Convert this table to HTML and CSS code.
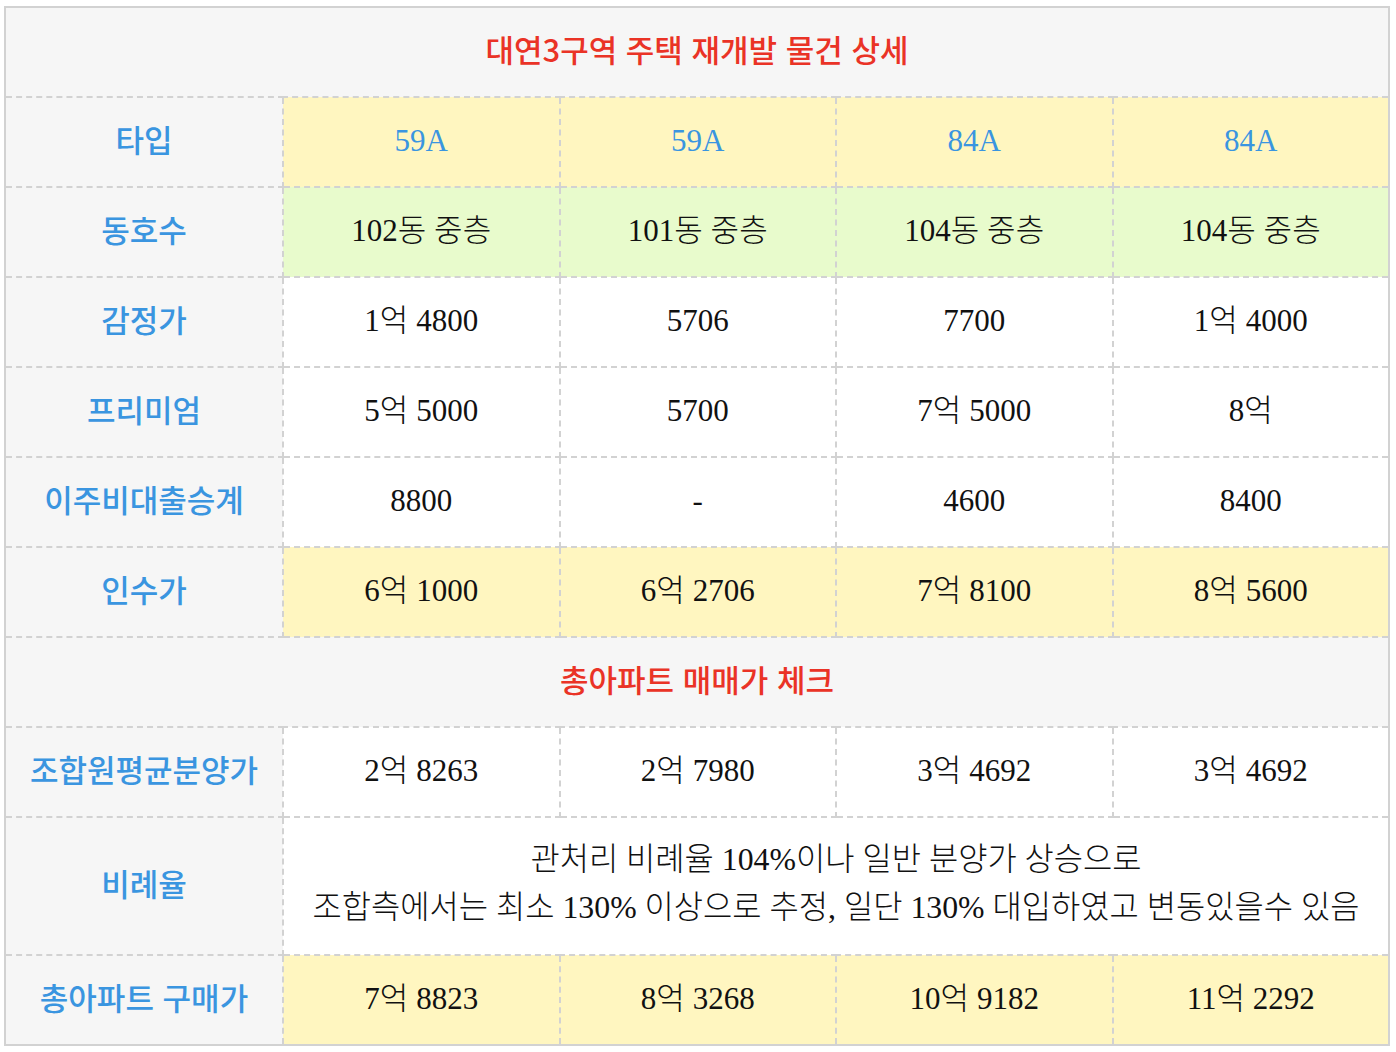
FILE: index.html
```html
<!DOCTYPE html>
<html lang="ko">
<head>
<meta charset="utf-8">
<link rel="stylesheet" href="styles.css">
</head>
<body>
<div class="wrap">
<table class="tbl">
  <colgroup>
    <col class="c-label"><col><col><col><col>
  </colgroup>
  <tr class="r-head"><td colspan="5" class="title">대연3구역 주택 재개발 물건 상세</td></tr>
  <tr><th>타입</th><td class="yel type">59A</td><td class="yel type">59A</td><td class="yel type">84A</td><td class="yel type">84A</td></tr>
  <tr><th>동호수</th><td class="grn">102동 중층</td><td class="grn">101동 중층</td><td class="grn">104동 중층</td><td class="grn">104동 중층</td></tr>
  <tr><th>감정가</th><td>1억 4800</td><td>5706</td><td>7700</td><td>1억 4000</td></tr>
  <tr><th>프리미엄</th><td>5억 5000</td><td>5700</td><td>7억 5000</td><td>8억</td></tr>
  <tr><th>이주비대출승계</th><td>8800</td><td>-</td><td>4600</td><td>8400</td></tr>
  <tr><th>인수가</th><td class="yel">6억 1000</td><td class="yel">6억 2706</td><td class="yel">7억 8100</td><td class="yel">8억 5600</td></tr>
  <tr class="r-head"><td colspan="5" class="title">총아파트 매매가 체크</td></tr>
  <tr><th>조합원평균분양가</th><td>2억 8263</td><td>2억 7980</td><td>3억 4692</td><td>3억 4692</td></tr>
  <tr class="r-tall"><th>비례율</th><td colspan="4" class="note">관처리 비례율 104%이나 일반 분양가 상승으로<br>조합측에서는 최소 130% 이상으로 추정, 일단 130% 대입하였고 변동있을수 있음</td></tr>
  <tr><th>총아파트 구매가</th><td class="yel">7억 8823</td><td class="yel">8억 3268</td><td class="yel">10억 9182</td><td class="yel">11억 2292</td></tr>
</table>
</div>
</body>
</html>
```

FILE: styles.css
```css
html, body {
  margin: 0;
  padding: 0;
  background: #ffffff;
}
.wrap {
  padding: 6px 6px 0 4px;
}
.tbl {
  width: 1386px;
  border-collapse: collapse;
  table-layout: fixed;
  border: 2px solid #d2d2d2;
  font-family: "Liberation Serif", "Noto Sans CJK KR", serif;
  font-size: 31px;
  font-weight: 300;
  line-height: 40px;
  color: #111111;
}
.c-label {
  width: 278px;
}
.tbl tr {
  height: 90px;
}
.tbl tr.r-tall {
  height: 138px;
}
.tbl td, .tbl th {
  border: 2px dashed #d2d2d2;
  padding: 0 0 2px 0;
  text-align: center;
  vertical-align: middle;
  background: #ffffff;
}
.tbl th {
  background: #f6f6f6;
  color: #3a95e0;
  font-family: "Noto Sans CJK KR", sans-serif;
  font-weight: 500;
  font-size: 31px;
  padding-bottom: 6px;
}
.tbl td.title {
  background: #f6f6f6;
  color: #ea3326;
  font-family: "Noto Sans CJK KR", sans-serif;
  font-weight: 500;
  font-size: 31px;
  padding-bottom: 6px;
}
.tbl td.yel {
  background: #fff6c0;
}
.tbl td.grn {
  background: #e8fbcc;
}
.tbl td.type {
  color: #3a95e0;
}
.tbl td.note {
  font-size: 31.8px;
  line-height: 48px;
  padding-bottom: 4px;
}
```
